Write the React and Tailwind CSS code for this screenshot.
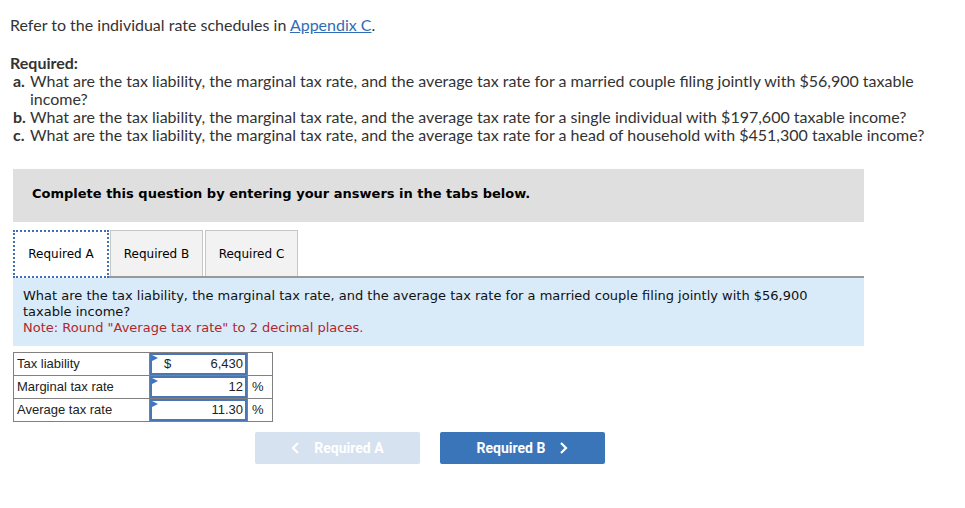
import React from 'react';

const ROWS = [
  { label: 'Tax liability', prefix: '$', value: '6,430', unit: '' },
  { label: 'Marginal tax rate', prefix: '', value: '12', unit: '%' },
  { label: 'Average tax rate', prefix: '', value: '11.30', unit: '%' }
];

export default function App() {
  return (
    <div className="w-[965px] h-[508px] bg-white text-[#333] font-['Lato','Open_Sans',sans-serif] overflow-hidden">
      {/* Question text */}
      <div className="pl-[10px] pt-[16px] text-[16px] leading-[18px]">
        <p>
          Refer to the individual rate schedules in{' '}
          <a href="#" className="text-[#2f6db5] underline">Appendix C</a>.
        </p>
        <p className="mt-[20px] font-bold">Required:</p>
        <ol className="pr-[40px]">
          <li className="flex">
            <span className="font-bold w-[20px] pl-[3px] shrink-0">a.</span>
            <span>What are the tax liability, the marginal tax rate, and the average tax rate for a married couple filing jointly with $56,900 taxable income?</span>
          </li>
          <li className="flex">
            <span className="font-bold w-[20px] pl-[3px] shrink-0">b.</span>
            <span>What are the tax liability, the marginal tax rate, and the average tax rate for a single individual with $197,600 taxable income?</span>
          </li>
          <li className="flex">
            <span className="font-bold w-[20px] pl-[3px] shrink-0">c.</span>
            <span>What are the tax liability, the marginal tax rate, and the average tax rate for a head of household with $451,300 taxable income?</span>
          </li>
        </ol>
      </div>

      <div className="ml-[13px] w-[851px] mt-[25px]">
        {/* Instruction banner */}
        <div className="h-[53px] bg-[#dfdfdf] flex items-center pl-[19px] pb-[3px] font-['DejaVu_Sans',sans-serif] font-bold text-[13px] text-black">
          Complete this question by entering your answers in the tabs below.
        </div>

        {/* Tabs */}
        <div className="mt-[8px] flex items-end border-b-2 border-[#999] font-['DejaVu_Sans',sans-serif] text-[12px] text-black">
          <div className="h-[48px] w-[96px] flex items-center justify-center bg-white border-2 border-dotted border-[#3f70b5] -mb-[2px]">
            Required A
          </div>
          <div className="h-[46px] w-[93px] ml-[1px] flex items-center justify-center bg-[#f2f2f2] border border-[#c6c6c6] border-b-0">
            Required B
          </div>
          <div className="h-[46px] w-[93px] ml-[2px] flex items-center justify-center bg-[#f2f2f2] border border-[#c6c6c6] border-b-0">
            Required C
          </div>
        </div>

        {/* Prompt panel */}
        <div className="bg-[#d9ebf9] h-[68px] pl-[10px] pr-[40px] pt-[10px] font-['DejaVu_Sans',sans-serif] text-[13px] leading-[16px] text-[#111]">
          <p>What are the tax liability, the marginal tax rate, and the average tax rate for a married couple filing jointly with $56,900 taxable income?</p>
          <p className="text-[#b3262b]">Note: Round "Average tax rate" to 2 decimal places.</p>
        </div>

        {/* Answer table */}
        <table className="mt-[6px] border-collapse font-['Liberation_Sans',sans-serif] text-[13px] text-[#222]">
          <tbody>
            {ROWS.map(r => (
              <tr key={r.label} className="h-[23px]">
                <td className="w-[136px] border border-[#808080] pl-[3px]">{r.label}</td>
                <td className="w-[98px] border border-[#808080] p-0">
                  <div className="relative h-[22px] border-2 border-[#4a77b4] flex items-center justify-between pl-[12px] pr-[2px]">
                    <span className="absolute left-0 top-0 w-0 h-0 border-t-[3px] border-t-transparent border-b-[3px] border-b-transparent border-l-[6px] border-l-[#3d74c4]" />
                    <span>{r.prefix}</span>
                    <span>{r.value}</span>
                  </div>
                </td>
                <td className="w-[25px] border border-[#808080] pl-[4px]">{r.unit}</td>
              </tr>
            ))}
          </tbody>
        </table>

        {/* Navigation */}
        <div className="mt-[10px] ml-[242px] flex gap-[20px] font-['Roboto',sans-serif] font-bold text-[14px] text-white">
          <button className="w-[165px] h-[32px] rounded-[2px] bg-[#d6e2f0] flex items-center justify-center gap-[14px]">
            <svg width="9" height="12" viewBox="0 0 9 12"><path d="M7 1 L2 6 L7 11" stroke="white" strokeWidth="2.2" fill="none" /></svg>
            Required A
          </button>
          <button className="w-[165px] h-[32px] rounded-[2px] bg-[#3a75b9] flex items-center justify-center gap-[14px]">
            Required B
            <svg width="9" height="12" viewBox="0 0 9 12"><path d="M2 1 L7 6 L2 11" stroke="white" strokeWidth="2.2" fill="none" /></svg>
          </button>
        </div>
      </div>
    </div>
  );
}
